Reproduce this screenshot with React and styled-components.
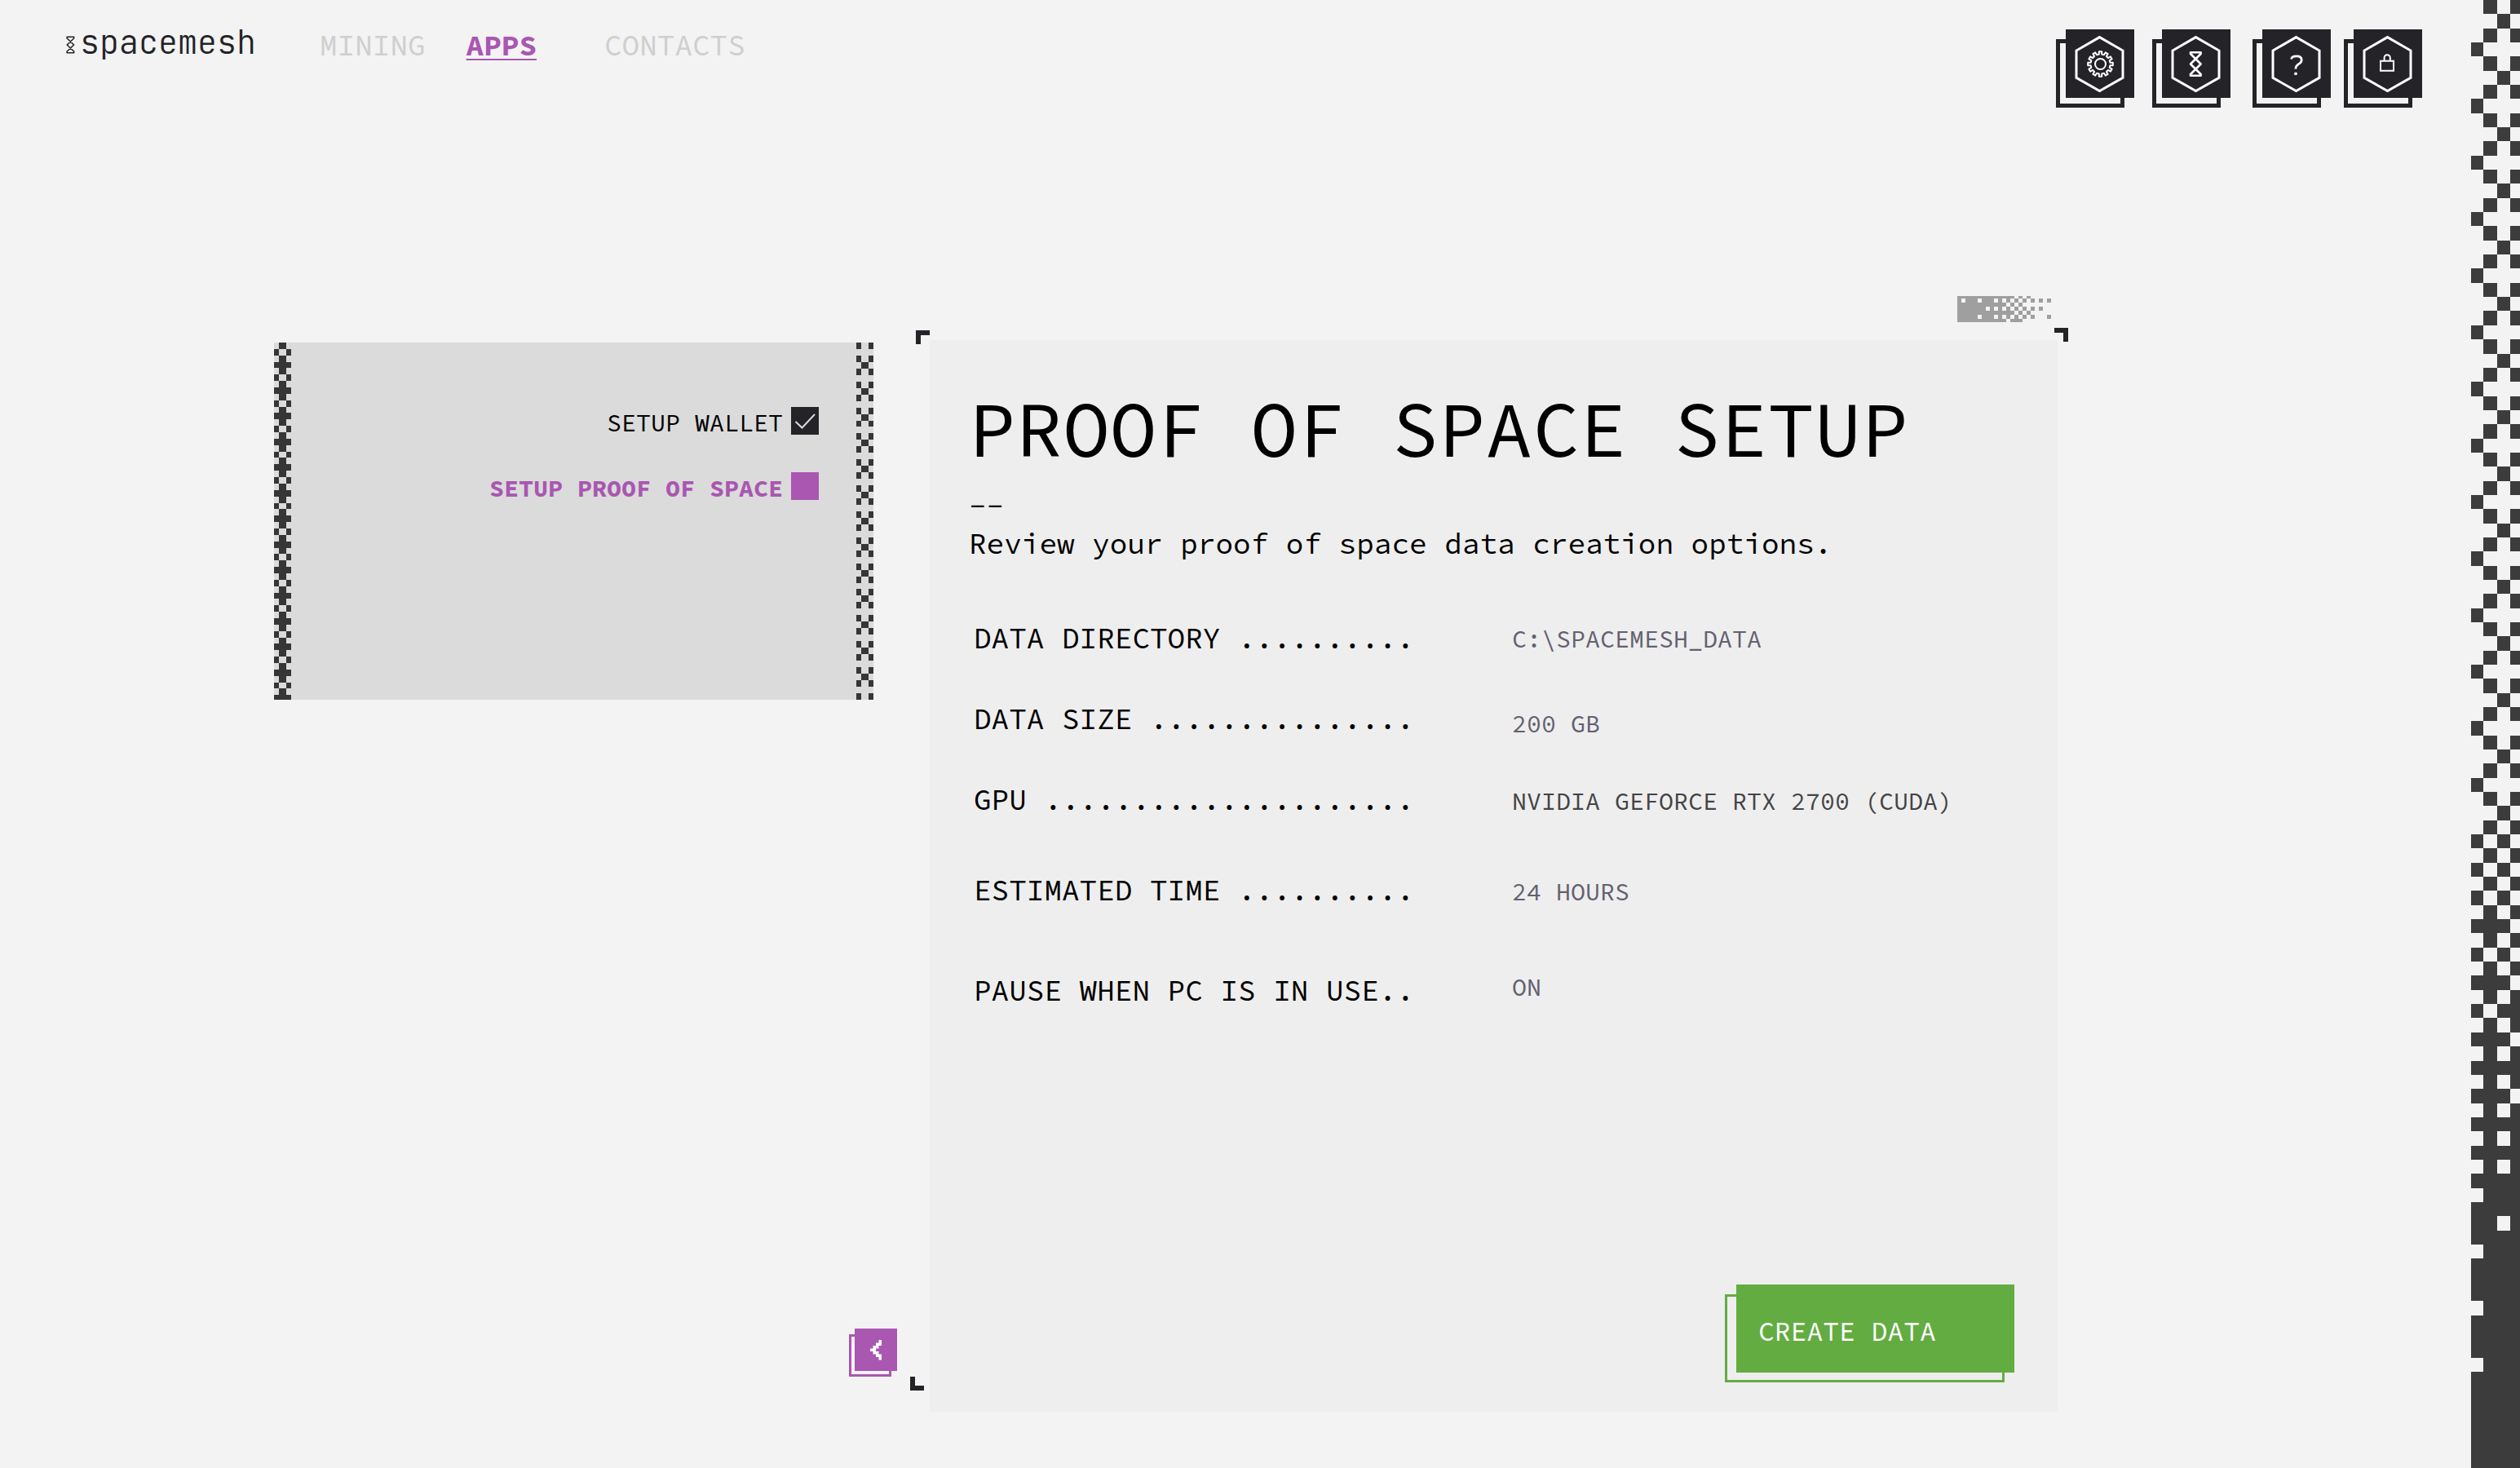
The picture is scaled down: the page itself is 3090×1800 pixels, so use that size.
import React from "react";
import styled, { createGlobalStyle } from "styled-components";

const color = {
  page: "#f3f3f3",
  panel: "#eeeeee",
  side: "#dbdbdb",
  ink: "#242328",
  black: "#000000",
  purple: "#a957b1",
  green: "#63ac42",
  muted: "#cfcfcf",
  slate: "#646070",
  graphite: "#444444",
  pixel: "#3c3c3c",
  stamp: "#9f9f9f",
};

const mono = '"Source Code Pro", "Liberation Mono", monospace';

const GlobalStyle = createGlobalStyle`
  *, *::before, *::after { box-sizing: border-box; }
  body {
    margin: 0;
    background: ${color.page};
    color: ${color.black};
    font-family: ${mono};
  }
  h1, p, dl, dd, ul { margin: 0; padding: 0; }
  svg { display: block; }
`;

/* ---------- page frame ---------- */

const Page = styled.div`
  display: grid;
  grid-template-columns: minmax(0, 1fr) 60px;
  min-height: 100vh;
`;

const Content = styled.div`
  display: flex;
  flex-direction: column;
`;

const PixelEdge = styled.aside`
  background: ${color.pixel};
  overflow: hidden;
`;

const Header = styled.header`
  display: flex;
  align-items: flex-start;
  padding: 24px 60px 0 81px;
`;

const Brand = styled.a`
  display: flex;
  align-items: baseline;
  gap: 6px;
  color: ${color.ink};
  font-family: "JetBrains Mono", "DejaVu Sans Mono", monospace;
  font-size: 40px;
  font-weight: 300;
  line-height: 56px;
  text-decoration: none;
`;

const Nav = styled.nav`
  display: flex;
  flex: 1;
  margin: 8px 0 0 78px;
`;

const NavLink = styled.a`
  margin-right: ${(p) => p.$after || 0}px;
  color: ${(p) => (p.$active ? color.purple : color.muted)};
  font-size: 36px;
  font-weight: ${(p) => (p.$active ? 700 : 400)};
  line-height: 48px;
  text-decoration: ${(p) => (p.$active ? "underline" : "none")};
  text-decoration-thickness: 2px;
  text-underline-offset: 4px;
`;

const Tools = styled.div`
  display: flex;
  margin-top: 12px;
`;

/* ---------- buttons with an offset outline ---------- */

const Frame = styled.div`
  position: relative;
  flex: none;
  color: ${(p) => p.$color};
  margin-right: ${(p) => p.$after || 0}px;

  &::before {
    content: "";
    position: absolute;
    top: ${(p) => p.$shift}px;
    right: ${(p) => p.$shift}px;
    bottom: -${(p) => p.$shift}px;
    left: -${(p) => p.$reach || p.$shift}px;
    border: ${(p) => p.$line}px solid currentColor;
  }
`;

const SquareButton = styled.button`
  position: relative;
  display: block;
  width: ${(p) => p.$size}px;
  height: ${(p) => p.$size}px;
  padding: 0;
  border: 0;
  background: ${(p) => p.$color};
  cursor: pointer;
`;

const WideButton = styled.button`
  position: relative;
  display: block;
  width: 341px;
  height: 108px;
  padding: 8px 27px 0;
  border: 0;
  background: ${color.green};
  color: #ffffff;
  font-family: inherit;
  font-size: 33px;
  line-height: 48px;
  text-align: left;
  cursor: pointer;
`;

/* ---------- main area ---------- */

const Main = styled.main`
  display: grid;
  flex: 1;
  grid-template-columns: minmax(0, 764fr) minmax(0, 1383fr);
  column-gap: 40px;
  padding: 297px 507px 69px 336px;
`;

const LeftColumn = styled.div`
  display: flex;
  flex-direction: column;
  justify-content: space-between;
  align-items: flex-end;
  padding: 3px 0 50px;
`;

const StepsCard = styled.section`
  display: flex;
  justify-content: space-between;
  align-self: stretch;
  height: 438px;
  margin-right: 29px;
  background: ${color.side};
  overflow: hidden;
`;

const StepList = styled.ul`
  display: flex;
  flex: 1;
  flex-direction: column;
  gap: 46px;
  padding: 79px 46px 0 0;
  list-style: none;
`;

const Step = styled.label`
  display: flex;
  align-items: center;
  justify-content: flex-end;
  gap: 10px;
  height: 34px;
  color: ${(p) => (p.$current ? color.purple : color.black)};
  font-size: 30px;
  font-weight: ${(p) => (p.$current ? 700 : 400)};
  line-height: 38px;
  white-space: nowrap;
`;

const StepText = styled.span`
  padding-top: 3px;
`;

const BoxHolder = styled.span`
  display: grid;
  flex: none;

  & > * {
    grid-area: 1 / 1;
  }
`;

const TickBox = styled.input`
  appearance: none;
  width: 34px;
  height: 34px;
  margin: 0;
  background: ${(p) => (p.$current ? color.purple : color.ink)};
`;

const TickMark = styled.svg`
  pointer-events: none;
  z-index: 1;
`;

const Panel = styled.section`
  position: relative;
  display: flex;
  flex-direction: column;
  padding: 41px 53px 48px 48px;
  background: ${color.panel};
`;

const Corner = styled.span`
  position: absolute;
  width: 17px;
  height: 17px;
  border: 0 solid ${color.ink};
`;

const TopLeft = styled(Corner)`
  top: -12px;
  left: -17px;
  border-width: 6px 0 0 6px;
`;

const TopRight = styled(Corner)`
  top: -15px;
  right: -13px;
  border-width: 6px 6px 0 0;
`;

const BottomLeft = styled(Corner)`
  bottom: 26px;
  left: -24px;
  border-width: 0 0 6px 6px;
`;

const Stamp = styled.svg`
  position: absolute;
  top: -54px;
  right: 8px;
`;

const Title = styled.h1`
  margin-bottom: 5px;
  font-size: 96px;
  font-weight: 400;
  line-height: 136px;
  white-space: nowrap;
`;

const Rule = styled.p`
  font-size: 36px;
  line-height: 44px;
`;

const Intro = styled.p`
  font-size: 36px;
  line-height: 48px;
`;

const Options = styled.dl`
  display: flex;
  flex-direction: column;
  margin-top: 68px;
  padding-left: 6px;
`;

const Option = styled.div`
  display: grid;
  grid-template-columns: 540px minmax(0, 1fr);
  column-gap: 120px;
  align-items: ${(p) => p.$align};
  margin-bottom: ${(p) => p.$after}px;
`;

const OptionName = styled.dt`
  font-size: 36px;
  line-height: 48px;
  white-space: nowrap;
`;

const OptionValue = styled.dd`
  color: ${(p) => (p.$strong ? color.graphite : color.slate)};
  font-size: 30px;
  line-height: 38px;
  white-space: nowrap;
`;

const Actions = styled.div`
  display: flex;
  flex: 1;
  align-items: flex-end;
  justify-content: flex-end;
`;

/* ---------- drawings ---------- */

// Dark columns of each row in the right-hand edge, where the plain weave ends.
const denseRows = {
  59: "ac", 61: "ac", 63: "ac", 65: "abc", 67: "ac", 69: "abc",
  70: "bd", 71: "acd", 73: "abc", 75: "abcd", 77: "abc", 79: "abcd",
  81: "abcd", 83: "abcd", 84: "bcd", 86: "abd", 88: "bcd", 92: "bcd",
  96: "bcd",
};

function edgeRow(i) {
  if (denseRows[i]) return denseRows[i];
  if (i > 84) return "abcd";
  if (i % 2 === 0) return "bd";
  return i % 4 === 1 ? "c" : "a";
}

function PixelEdgeArt() {
  const cell = 17.34;
  const xs = { a: [0, 15], b: [15, 17], c: [32, 16], d: [48, 12] };
  const cells = [];
  for (let i = 0; i < 103; i += 1) {
    const dark = edgeRow(i);
    const top = Math.round(i * cell);
    const bottom = Math.round((i + 1) * cell);
    Object.keys(xs).forEach((k) => {
      if (!dark.includes(k)) {
        cells.push(`M${xs[k][0]} ${top}h${xs[k][1]}V${bottom}h-${xs[k][1]}z`);
      }
    });
  }
  return (
    <svg width="60" height="1790" aria-hidden="true" shapeRendering="crispEdges">
      <path d={cells.join("")} fill={color.page} />
    </svg>
  );
}

function PixelBorder({ cell, pattern }) {
  const xs = { a: [0, 6], b: [6, 9], c: [15, 6] };
  const cells = [];
  for (let i = 0; i * cell < 438; i += 1) {
    const top = Math.round(i * cell);
    const bottom = Math.round((i + 1) * cell);
    pattern[i % 4].split("").forEach((k) => {
      cells.push(`M${xs[k][0]} ${top}h${xs[k][1]}V${bottom}h-${xs[k][1]}z`);
    });
  }
  return (
    <svg width="21" height="438" aria-hidden="true" shapeRendering="crispEdges">
      <path d={cells.join("")} fill="#363636" />
    </svg>
  );
}

function StampArt() {
  const rows = [
    "XXXXXXXXXXXXXX.X.X.....",
    "X.XXX.XXX.X.X.X.X.X.X.X",
    "XXXXXXXXXXXX.X.X.......",
    "XXXXXXX.X.X.X.X.X.X.X..",
    "XXXXXXXXXXXXXX.X.X.....",
    "XXXXX.XXX.X.X.X.X.X...X",
    "XXXXXXXXXXXX.XXX.......",
  ];
  const ys = [0, 3, 8, 13, 18, 23, 28, 32];
  let d = "";
  rows.forEach((row, r) => {
    row.split("").forEach((c, k) => {
      if (c === "X") d += `M${k * 5} ${ys[r]}h5V${ys[r + 1]}h-5z`;
    });
  });
  return (
    <Stamp width="115" height="32" aria-hidden="true" shapeRendering="crispEdges">
      <path d={d} fill={color.stamp} />
    </Stamp>
  );
}

function gearPath(cx, cy, outer, root, teeth) {
  const pts = [];
  const step = (Math.PI * 2) / teeth;
  for (let i = 0; i < teeth; i += 1) {
    const mid = i * step - Math.PI / 2;
    [
      [-0.28, root],
      [-0.21, outer],
      [0.21, outer],
      [0.28, root],
    ].forEach(([o, r]) => {
      const a = mid + o * step;
      pts.push(`${(cx + r * Math.cos(a)).toFixed(2)} ${(cy + r * Math.sin(a)).toFixed(2)}`);
    });
  }
  return `M${pts.join("L")}Z`;
}

function Hexagon({ children }) {
  return (
    <svg width="84" height="84" viewBox="0 0 84 84" fill="none" stroke="#ffffff" aria-hidden="true">
      <path d="M41.5 9.6L70 26V59.4L41.5 75.6L13 59.4V26Z" strokeWidth="3" />
      {children}
    </svg>
  );
}

const GearIcon = () => (
  <Hexagon>
    <path d={gearPath(42.5, 42.5, 15.4, 12, 12)} strokeWidth="2" strokeLinejoin="round" />
    <circle cx="42.5" cy="42.5" r="6.5" strokeWidth="2" />
  </Hexagon>
);

const HourglassIcon = () => (
  <Hexagon>
    <path
      d="M35 28.2H47.6V30L35 42.5L47.6 55V56.8H35V55L47.6 42.5L35 30Z"
      strokeWidth="2.6"
      strokeLinejoin="round"
    />
  </Hexagon>
);

const HelpIcon = () => (
  <Hexagon>
    <path
      d="M35.8 36.6C35.8 34 37.8 32.9 42 32.9C46.2 32.9 48.2 34.6 48.2 37.4C48.2 43.4 40.9 41.4 40.9 48.4"
      strokeWidth="2.8"
    />
    <circle cx="41" cy="54.3" r="1.9" fill="#ffffff" stroke="none" />
  </Hexagon>
);

const LockIcon = () => (
  <Hexagon>
    <path d="M33 38.8H49V50.8H33Z" strokeWidth="2" />
    <path d="M37.6 38.8V34.8A3.6 3.6 0 0 1 44.8 34.8V38.8" strokeWidth="2" />
  </Hexagon>
);

const BrandMark = () => (
  <svg width="11" height="22" viewBox="0 0 11 22" fill="none" stroke={color.ink} aria-hidden="true">
    <path
      d="M1.2 1.2H9.6V3L1.2 11L9.6 19V20.8H1.2V19L9.6 11L1.2 3Z"
      strokeWidth="1.6"
      strokeLinejoin="round"
    />
  </svg>
);

const BackArrow = () => (
  <svg width="52" height="52" viewBox="0 0 52 52" fill="#ffffff" aria-hidden="true">
    <path d="M29.5 14H33V21H29.5V24.5H26V28H29.5V31.5H33V38.5H29.5V35H26V31.5H22.5V28H19V24.5H22.5V21H26V17.5H29.5Z" />
  </svg>
);

/* ---------- content ---------- */

const tools = [
  { name: "Settings", Icon: GearIcon, after: 34 },
  { name: "Network", Icon: HourglassIcon, after: 39 },
  { name: "Help", Icon: HelpIcon, after: 28 },
  { name: "Lock", Icon: LockIcon, after: 0 },
];

const options = [
  { name: "DATA DIRECTORY ..........", value: "C:\\SPACEMESH_DATA", align: "center", after: 51 },
  { name: "DATA SIZE ...............", value: "200 GB", align: "end", after: 51 },
  { name: "GPU .....................", value: "NVIDIA GEFORCE RTX 2700 (CUDA)", align: "baseline", after: 63, strong: true },
  { name: "ESTIMATED TIME ..........", value: "24 HOURS", align: "baseline", after: 75 },
  { name: "PAUSE WHEN PC IS IN USE..", value: "ON", align: "start", after: 0 },
];

export default function App() {
  return (
    <>
      <GlobalStyle />
      <Page>
        <Content>
          <Header>
            <Brand href="#home">
              <BrandMark />
              spacemesh
            </Brand>
            <Nav>
              <NavLink href="#mining" $after={50}>MINING</NavLink>
              <NavLink href="#apps" $active $after={83}>APPS</NavLink>
              <NavLink href="#contacts">CONTACTS</NavLink>
            </Nav>
            <Tools>
              {tools.map(({ name, Icon, after }) => (
                <Frame key={name} $color={color.ink} $shift={12} $line={5} $after={after}>
                  <SquareButton type="button" aria-label={name} $size={84} $color={color.ink}>
                    <Icon />
                  </SquareButton>
                </Frame>
              ))}
            </Tools>
          </Header>

          <Main>
            <LeftColumn>
              <StepsCard>
                <PixelBorder cell={7.86} pattern={["b", "ac", "b", "abc"]} />
                <StepList>
                  <li>
                    <Step>
                      <StepText>SETUP WALLET</StepText>
                      <BoxHolder>
                        <TickBox type="checkbox" checked readOnly />
                        <TickMark width="34" height="34" fill="none" stroke={color.side} strokeWidth="2" aria-hidden="true">
                          <path d="M5.5 18L13.5 25.5L29 9" />
                        </TickMark>
                      </BoxHolder>
                    </Step>
                  </li>
                  <li>
                    <Step $current>
                      <StepText>SETUP PROOF OF SPACE</StepText>
                      <BoxHolder>
                        <TickBox type="checkbox" checked={false} readOnly $current />
                      </BoxHolder>
                    </Step>
                  </li>
                </StepList>
                <PixelBorder cell={7.96} pattern={["ac", "", "ac", "b"]} />
              </StepsCard>
              <Frame $color={color.purple} $shift={7} $line={3}>
                <SquareButton type="button" aria-label="Back" $size={52} $color={color.purple}>
                  <BackArrow />
                </SquareButton>
              </Frame>
            </LeftColumn>

            <Panel>
              <TopLeft />
              <TopRight />
              <BottomLeft />
              <StampArt />
              <Title>PROOF OF SPACE SETUP</Title>
              <Rule>--</Rule>
              <Intro>Review your proof of space data creation options.</Intro>
              <Options>
                {options.map((o) => (
                  <Option key={o.name} $align={o.align} $after={o.after}>
                    <OptionName>{o.name}</OptionName>
                    <OptionValue $strong={o.strong}>{o.value}</OptionValue>
                  </Option>
                ))}
              </Options>
              <Actions>
                <Frame $color={color.green} $shift={12} $reach={14} $line={3}>
                  <WideButton type="button">CREATE DATA</WideButton>
                </Frame>
              </Actions>
            </Panel>
          </Main>
        </Content>
        <PixelEdge>
          <PixelEdgeArt />
        </PixelEdge>
      </Page>
    </>
  );
}
